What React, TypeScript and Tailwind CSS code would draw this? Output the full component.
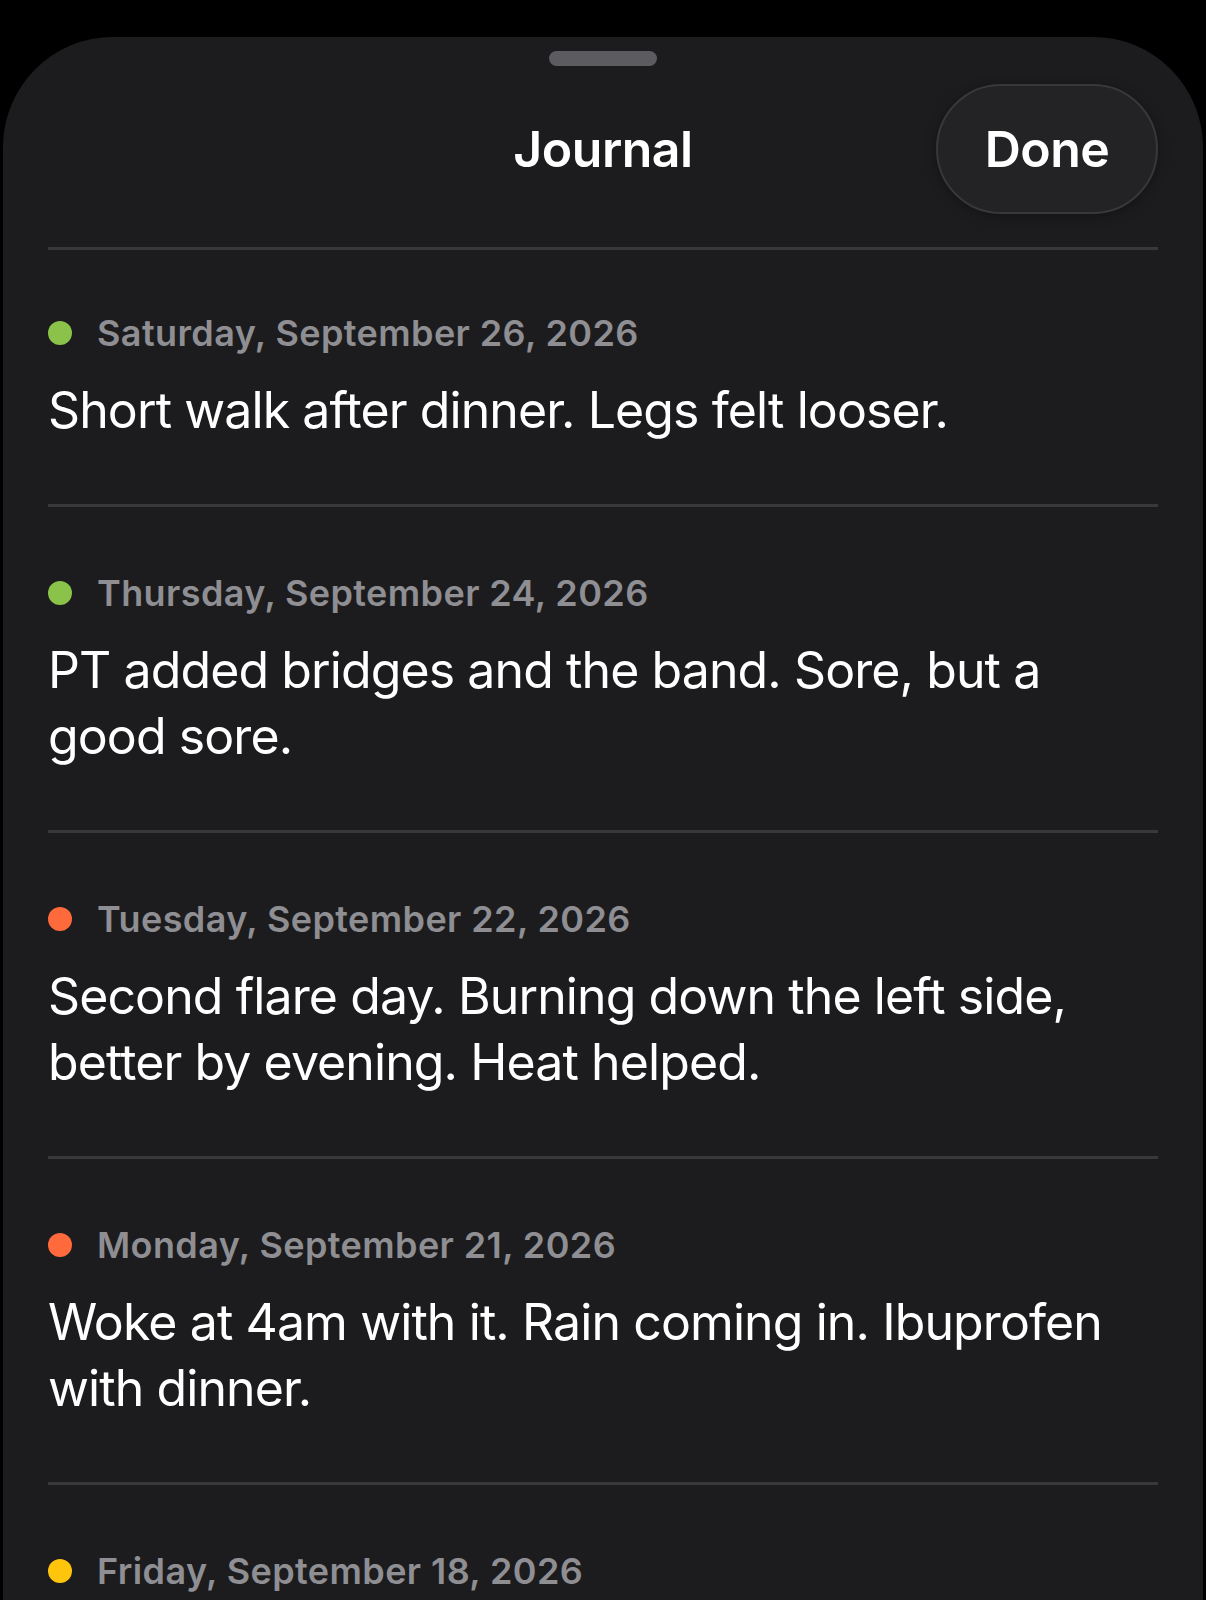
import React from "react";

type Entry = { date: string; text?: string; color: string };

const entries: Entry[] = [
  { date: "Saturday, September 26, 2026", text: "Short walk after dinner. Legs felt looser.", color: "bg-[#8bc34a]" },
  { date: "Thursday, September 24, 2026", text: "PT added bridges and the band. Sore, but a good sore.", color: "bg-[#8bc34a]" },
  { date: "Tuesday, September 22, 2026", text: "Second flare day. Burning down the left side, better by evening. Heat helped.", color: "bg-[#ff6a3d]" },
  { date: "Monday, September 21, 2026", text: "Woke at 4am with it. Rain coming in. Ibuprofen with dinner.", color: "bg-[#ff6a3d]" },
  { date: "Friday, September 18, 2026", color: "bg-[#ffc40c]" },
];

export default function App() {
  return (
    <div className="w-[1206px] h-[1600px] bg-black overflow-hidden" style={{ fontFamily: "Inter, 'Noto Sans', sans-serif" }}>
      <div className="mt-[37px] mx-[3px] h-[1600px] bg-[#1c1c1e] rounded-t-[110px] px-[45px]">
        <div className="flex justify-center pt-[14px]">
          <div className="w-[108px] h-[15px] rounded-full bg-[#5c5c60]" />
        </div>
        <div className="grid grid-cols-[1fr_auto_1fr] items-center mt-[18px] h-[130px]">
          <div />
          <div className="text-white text-[50px] font-semibold leading-none tracking-[-0.5px]">Journal</div>
          <div className="flex justify-end">
            <button className="w-[222px] h-[130px] rounded-full bg-[#232325] border-2 border-[#38383b] shadow-[0_2px_12px_rgba(0,0,0,0.35)] text-white text-[50px] font-semibold leading-none tracking-[-0.5px]">
              Done
            </button>
          </div>
        </div>
        <div className="mt-[33px] h-[3px] bg-[#38383a]" />
        {entries.map((e, i) => (
          <div key={i}>
            <div className={i === 0 ? "pt-[59px] pb-[61px]" : "pt-[62px] pb-[61px]"}>
              <div className="flex items-center h-[48px]">
                <div className={`w-[24px] h-[24px] rounded-full ${e.color}`} />
                <div className="ml-[25px] text-[36px] leading-[48px] font-semibold tracking-[0.4px] text-[#8e8e93]">{e.date}</div>
              </div>
              {e.text && (
                <div className="mt-[20px] text-white text-[50px] leading-[66px] tracking-[-0.9px]">{e.text}</div>
              )}
            </div>
            {e.text && <div className="h-[3px] bg-[#38383a]" />}
          </div>
        ))}
      </div>
    </div>
  );
}
